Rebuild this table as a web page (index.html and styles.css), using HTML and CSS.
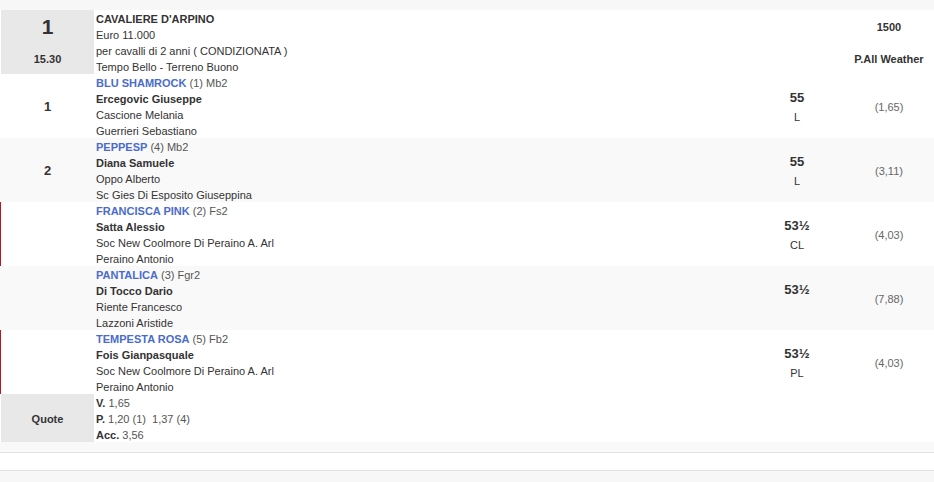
FILE: index.html
```html
<!DOCTYPE html>
<html lang="it">
<head>
<meta charset="UTF-8" />
<meta name="viewport" content="width=device-width, initial-scale=1" />
<title>Corsa 1 - Cavaliere d'Arpino</title>
<link rel="stylesheet" href="styles.css">
</head>
<body>
  <div class="top-bar"></div>

  <div class="race">
    <!-- intestazione corsa -->
    <div class="row head">
      <div class="num-cell split">
        <span class="race-num">1</span>
        <span class="race-time">15.30</span>
      </div>
      <div class="info">
        <div class="line"><strong>CAVALIERE D'ARPINO</strong></div>
        <div class="line">Euro 11.000</div>
        <div class="line">per cavalli di 2 anni ( CONDIZIONATA )</div>
        <div class="line">Tempo Bello - Terreno Buono</div>
      </div>
      <div></div>
      <div class="split right-info">
        <span>1500</span>
        <span>P.All Weather</span>
      </div>
    </div>

    <!-- cavalli -->
    <div class="row">
      <div class="pos">1</div>
      <div class="info">
        <div class="line"><span class="horse">BLU SHAMROCK</span> <span class="muted">(1) Mb2</span></div>
        <div class="line"><strong>Ercegovic Giuseppe</strong></div>
        <div class="line">Cascione Melania</div>
        <div class="line">Guerrieri Sebastiano</div>
      </div>
      <div class="weight"><b>55</b><span>L</span></div>
      <div class="odds">(1,65)</div>
    </div>

    <div class="row alt">
      <div class="pos">2</div>
      <div class="info">
        <div class="line"><span class="horse">PEPPESP</span> <span class="muted">(4) Mb2</span></div>
        <div class="line"><strong>Diana Samuele</strong></div>
        <div class="line">Oppo Alberto</div>
        <div class="line">Sc Gies Di Esposito Giuseppina</div>
      </div>
      <div class="weight"><b>55</b><span>L</span></div>
      <div class="odds">(3,11)</div>
    </div>

    <div class="row out">
      <div class="pos"></div>
      <div class="info">
        <div class="line"><span class="horse">FRANCISCA PINK</span> <span class="muted">(2) Fs2</span></div>
        <div class="line"><strong>Satta Alessio</strong></div>
        <div class="line">Soc New Coolmore Di Peraino A. Arl</div>
        <div class="line">Peraino Antonio</div>
      </div>
      <div class="weight"><b>53½</b><span>CL</span></div>
      <div class="odds">(4,03)</div>
    </div>

    <div class="row alt">
      <div class="pos"></div>
      <div class="info">
        <div class="line"><span class="horse">PANTALICA</span> <span class="muted">(3) Fgr2</span></div>
        <div class="line"><strong>Di Tocco Dario</strong></div>
        <div class="line">Riente Francesco</div>
        <div class="line">Lazzoni Aristide</div>
      </div>
      <div class="weight"><b>53½</b><span></span></div>
      <div class="odds">(7,88)</div>
    </div>

    <div class="row out">
      <div class="pos"></div>
      <div class="info">
        <div class="line"><span class="horse">TEMPESTA ROSA</span> <span class="muted">(5) Fb2</span></div>
        <div class="line"><strong>Fois Gianpasquale</strong></div>
        <div class="line">Soc New Coolmore Di Peraino A. Arl</div>
        <div class="line">Peraino Antonio</div>
      </div>
      <div class="weight"><b>53½</b><span>PL</span></div>
      <div class="odds">(4,03)</div>
    </div>

    <!-- quote -->
    <div class="row">
      <div class="num-cell quote">Quote</div>
      <div class="info">
        <div class="line"><strong>V.</strong> <span class="muted">1,65</span></div>
        <div class="line"><strong>P.</strong> <span class="muted">1,20 (1)&nbsp; 1,37 (4)</span></div>
        <div class="line"><strong>Acc.</strong> <span class="muted">3,56</span></div>
      </div>
      <div></div>
      <div></div>
    </div>
  </div>

  <div class="foot"></div>
  <div class="foot-blank"></div>
  <div class="foot-rest"></div>
</body>
</html>
```

FILE: styles.css
```css
body {
  margin: 0;
  background: #fff;
  font-family: "Liberation Sans", Arial, sans-serif;
  font-size: 11px;
  color: #333;
}
.top-bar {
  height: 10px;
  background: #f7f7f7;
}
.row {
  display: grid;
  grid-template-columns: 93px 1fr 94px 90px;
  border-left: 1px solid transparent;
  background: #fff;
}
.row.alt {
  background: #f9f9f9;
}
.row.out {
  border-left-color: #c8101a;
}
.info {
  padding-left: 2px;
}
.line {
  height: 15px;
  padding-top: 1px;
  line-height: 16px;
  white-space: nowrap;
}
.num-cell {
  background: #e8e8e8;
  font-weight: 700;
  text-align: center;
}
.split {
  display: flex;
  flex-direction: column;
}
.split > span {
  height: 32px;
  padding-top: 2px;
  box-sizing: border-box;
  display: flex;
  align-items: center;
  justify-content: center;
}
.race-num {
  font-size: 21px;
}
.race-time {
  font-size: 11px;
}
.right-info {
  font-weight: 700;
  color: #333;
}
.pos {
  display: flex;
  align-items: center;
  justify-content: center;
  font-size: 13px;
  font-weight: 700;
}
.horse {
  color: #4a6ccb;
  font-weight: 700;
}
.muted {
  color: #555;
}
.weight {
  display: flex;
  flex-direction: column;
  justify-content: center;
  align-items: center;
  padding-top: 2px;
}
.weight b {
  font-size: 13px;
  line-height: 20px;
}
.weight span {
  height: 18px;
  line-height: 18px;
  font-size: 11px;
}
.odds {
  display: flex;
  align-items: center;
  justify-content: center;
  padding-top: 2px;
  color: #666;
  font-size: 11px;
}
.quote {
  display: flex;
  align-items: center;
  justify-content: center;
  padding-top: 2px;
  font-size: 11px;
}
.foot {
  height: 10px;
  background: #f9f9f9;
  border-bottom: 1px solid #e2e2e2;
}
.foot-blank {
  height: 17px;
  border-bottom: 1px solid #e2e2e2;
}
.foot-rest {
  height: 11px;
  background: #f7f7f7;
}
```
